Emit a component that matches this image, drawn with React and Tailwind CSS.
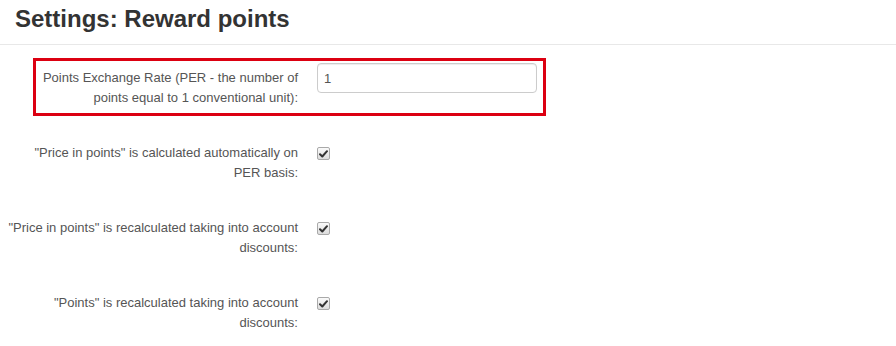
import React from "react";

const CheckMark = () => (
  <span className="mt-[4px] flex h-[13px] w-[13px] items-center justify-center rounded-[2px] border border-[#a9a9a9] bg-gradient-to-b from-[#fafafa] to-[#dcdcdc]">
    <svg width="9" height="8" viewBox="0 0 9 8">
      <path d="M1 4.2 L3.3 6.5 L8 1.2" fill="none" stroke="#333" strokeWidth="2" strokeLinecap="round" strokeLinejoin="round" />
    </svg>
  </span>
);

const rows = [
  ['"Price in points" is calculated automatically on', "PER basis:"],
  ['"Price in points" is recalculated taking into account', "discounts:"],
  ['"Points" is recalculated taking into account', "discounts:"],
];

const App = () => {
  return (
    <div className="min-h-[346px] w-[896px] bg-white font-['Liberation_Sans',Arial,sans-serif] text-[13px] text-[#555]">
      <div className="h-[45px] border-b border-[#e8e8e8] pl-[15px] pt-[4px]">
        <h1 className="text-[24px] font-bold leading-[30px] text-[#333]">
          Settings: Reward points
        </h1>
      </div>

      {/* highlighted row */}
      <div className="ml-[33px] mt-[13px] flex h-[58px] w-[513px] border-[3px] border-[#dc0011]">
        <label className="w-[262px] whitespace-nowrap pt-[7px] text-right leading-[20px]">
          Points Exchange Rate (PER - the number of
          <br />
          points equal to 1 conventional unit):
        </label>
        <div className="ml-[19px] pt-[2px]">
          <input
            type="text"
            defaultValue="1"
            className="h-[30px] w-[220px] rounded-[4px] border border-[#ccc] px-[6px] text-[13px] text-[#555] shadow-[inset_0_1px_1px_rgba(0,0,0,0.075)] outline-none"
          />
        </div>
      </div>

      <div className="mt-[27px] flex flex-col gap-[35px]">
        {rows.map((r, i) => (
          <div key={i} className="flex">
            <label className="w-[298px] whitespace-nowrap text-right leading-[20px]">
              {r[0]}
              <br />
              {r[1]}
            </label>
            <div className="ml-[19px]">
              <CheckMark />
            </div>
          </div>
        ))}
      </div>
    </div>
  );
};

export default App;
